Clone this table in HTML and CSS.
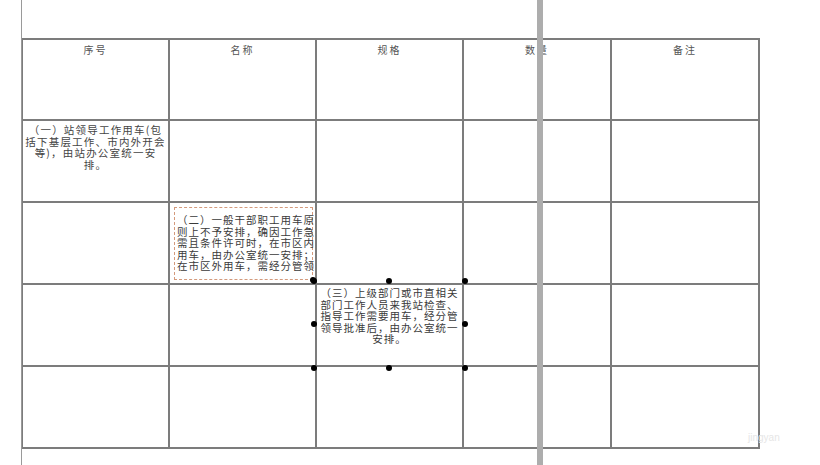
FILE: index.html
```html
<!DOCTYPE html>
<html lang="zh">
<head>
<meta charset="utf-8">
<link rel="stylesheet" href="styles.css">
</head>
<body>
<div class="page">
  <div class="sheet">
    <div class="grid">
      <div class="cell head">序号</div>
      <div class="cell head">名称</div>
      <div class="cell head">规格</div>
      <div class="cell head">数量</div>
      <div class="cell head">备注</div>

      <div class="cell body-text">（一）站领导工作用车(包<br>括下基层工作、市内外开会<br>等)，由站办公室统一安<br>排。</div>
      <div class="cell"></div>
      <div class="cell"></div>
      <div class="cell"></div>
      <div class="cell"></div>

      <div class="cell"></div>
      <div class="cell"></div>
      <div class="cell"></div>
      <div class="cell"></div>
      <div class="cell"></div>

      <div class="cell"></div>
      <div class="cell"></div>
      <div class="cell"></div>
      <div class="cell"></div>
      <div class="cell"></div>

      <div class="cell"></div>
      <div class="cell"></div>
      <div class="cell"></div>
      <div class="cell"></div>
      <div class="cell"></div>
    </div>

    <div class="textbox box-two">（二）一般干部职工用车原<br>则上不予安排，确因工作急<br>需且条件许可时，在市区内<br>用车，由办公室统一安排；<br>在市区外用车，需经分管领<span class="dot dot-br"></span></div>

    <div class="textbox box-three">（三）上级部门或市直相关<br>部门工作人员来我站检查、<br>指导工作需要用车，经分管<br>领导批准后，由办公室统一<br>安排。
      <span class="dot h-tl"></span><span class="dot h-tm"></span><span class="dot h-tr"></span>
      <span class="dot h-ml"></span><span class="dot h-mr"></span>
      <span class="dot h-bl"></span><span class="dot h-bm"></span><span class="dot h-br"></span>
    </div>
  </div>
  <div class="bar"></div>
  <div class="mark">jingyan</div>
</div>
</body>
</html>
```
FILE: styles.css
```css
html, body {
  margin: 0;
  padding: 0;
  background: #ffffff;
}
body {
  width: 820px;
  height: 465px;
  overflow: hidden;
  font-family: "Noto Sans CJK SC", "Noto Sans", sans-serif;
}
.page {
  position: relative;
  width: 820px;
  height: 465px;
}
.sheet {
  position: relative;
  margin-left: 21px;
  padding-top: 38px;
  height: 427px;
  border-left: 1px solid #9a9a9a;
}
.grid {
  display: grid;
  grid-template-columns: 147px 147px 147px 148px 148px;
  grid-template-rows: 81px 82px 82px 82px 82px;
  width: 737px;
  border-top: 2px solid #7c7c7c;
  border-left: 1px solid #7c7c7c;
}
.cell {
  border-right: 2px solid #7c7c7c;
  border-bottom: 2px solid #7c7c7c;
}
.head {
  text-align: center;
  font-size: 10px;
  color: #555;
  letter-spacing: 2px;
  padding-top: 4px;
  line-height: 12px;
}
.body-text {
  text-align: center;
  font-size: 10.5px;
  line-height: 11.5px;
  color: #444;
  letter-spacing: 1.2px;
  padding: 3px 2px 0 2px;
  white-space: nowrap;
}
.textbox {
  position: absolute;
  font-size: 10.5px;
  line-height: 11.5px;
  color: #3a3a3a;
  letter-spacing: 1px;
  white-space: nowrap;
}
.box-two {
  left: 152px;
  top: 207px;
  width: 133px;
  height: 63px;
  padding: 6px 2px 2px 2px;
  border: 1px dashed #d49a7c;
  text-align: left;
}
.box-three {
  left: 292px;
  top: 281px;
  width: 141px;
  height: 81px;
  padding: 6px 5px 0 5px;
  text-align: center;
}
.dot {
  position: absolute;
  width: 6px;
  height: 6px;
  border-radius: 50%;
  background: #000;
}
.dot-br { right: -4px; bottom: -4px; }
.h-tl { left: -3px; top: -3px; }
.h-tm { left: 72px; top: -3px; }
.h-tr { right: -3px; top: -3px; }
.h-ml { left: -3px; top: 40px; }
.h-mr { right: -3px; top: 40px; }
.h-bl { left: -3px; bottom: -3px; }
.h-bm { left: 72px; bottom: -3px; }
.h-br { right: -3px; bottom: -3px; }
.bar {
  position: absolute;
  left: 537px;
  top: 0;
  width: 6px;
  height: 465px;
  background: #adadad;
}
.mark {
  position: absolute;
  left: 748px;
  top: 432px;
  font-family: "Liberation Sans", sans-serif;
  font-size: 10px;
  color: #e6e6e6;
}
```
